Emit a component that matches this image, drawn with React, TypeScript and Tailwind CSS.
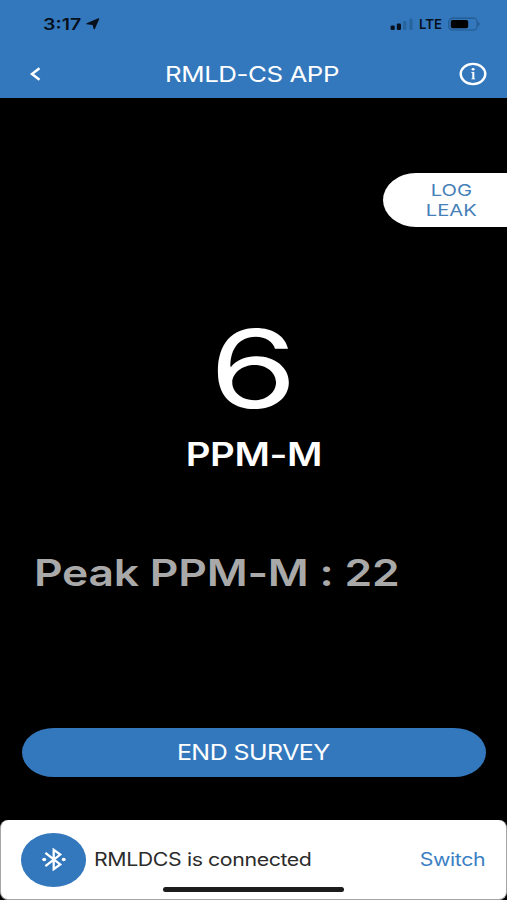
import type { ReactNode } from 'react';
import { clsx } from 'clsx';

type WideTextProps = {
  children: ReactNode;
  className?: string;
};

function WideText({ children, className }: WideTextProps) {
  return (
    <span className={clsx('inline-block whitespace-pre', className)}>
      {children}
    </span>
  );
}

function LocationArrow() {
  return (
    <svg viewBox="0 0 14 12" className="h-3 w-3.5" fill="#07101c" stroke="#07101c" strokeLinejoin="round">
      <path d="M12.6.9 8.3 10.8 7 6.4.9 5.7Z" strokeWidth="1.2" />
    </svg>
  );
}

function SignalBars() {
  return (
    <svg viewBox="0 0 24 12" className="h-3 w-6">
      <rect x="0.6" y="7.6" width="4.2" height="4.3" rx="1.2" fill="#07101c" />
      <rect x="6.8" y="5.6" width="4.2" height="6.3" rx="1.2" fill="#07101c" />
      <rect x="13" y="3" width="3.6" height="8.9" rx="1.2" fill="#28659f" />
      <rect x="19.2" y="0.8" width="3.4" height="11.1" rx="1.2" fill="#28659f" />
    </svg>
  );
}

function Battery() {
  return (
    <svg viewBox="0 0 34 14" className="h-3.5 w-[34px]">
      <rect x="0.8" y="1.2" width="28.4" height="11.8" rx="3.8" fill="none" stroke="#23588e" strokeWidth="1.2" />
      <rect x="2.8" y="3" width="17.4" height="8.2" rx="1.8" fill="#000" />
      <path d="M30.4 4.8c1.8.8 1.8 3.6 0 4.4Z" fill="#23588e" />
    </svg>
  );
}

function StatusBar() {
  return (
    <div className="flex h-12 items-center pr-[25px] pl-[43px]">
      <WideText className="w-[43px] origin-left scale-x-[1.22] text-[16px] leading-none font-semibold text-[#07101c]">
        3:17
      </WideText>
      <LocationArrow />
      <div className="ml-auto flex items-center">
        <SignalBars />
        <WideText className="ml-[5px] w-[29px] origin-left scale-x-[1.02] text-[13px] leading-none font-semibold text-[#07101c]">
          LTE
        </WideText>
        <Battery />
      </div>
    </div>
  );
}

function NavBar() {
  return (
    <div className="flex h-[50px] items-center justify-between pt-0.5 pr-5 pl-[29px]">
      <svg viewBox="0 0 14 14" className="h-3.5 w-3.5" fill="none" stroke="#fff" strokeWidth="2.5">
        <path d="M10.5 1.2 3 7l7.5 5.8" />
      </svg>
      <WideText className="ml-[3px] scale-x-[1.175] text-[22px] leading-none tracking-[-0.017em] text-white">
        RMLD-CS APP
      </WideText>
      <svg viewBox="0 0 28 24" className="h-6 w-7" fill="none" stroke="#fff">
        <ellipse cx="14" cy="12" rx="12.3" ry="10.1" strokeWidth="2.4" />
        <path d="M14.3 10v7" strokeWidth="2" />
        <path d="M12.2 10.4h2.6M12.4 16.9h3.8" strokeWidth="0.8" />
        <ellipse cx="14.1" cy="7.3" rx="1.5" ry="1.2" fill="#fff" stroke="none" />
      </svg>
    </div>
  );
}

function BluetoothBadge() {
  return (
    <div className="flex h-[53.5px] w-[65px] items-center justify-center rounded-[50%] bg-[#3378bd]">
      <svg viewBox="0 0 24 23" className="h-[23px] w-6" fill="none" stroke="#fff" strokeWidth="2.3">
        <path d="M3.4 4.8 18.2 16.4 11.7 21.2V1.8L18.2 6.6 3.4 18.2" />
        <ellipse cx="2.2" cy="11.5" rx="2" ry="1.7" fill="#fff" stroke="none" />
        <ellipse cx="21.7" cy="11.5" rx="2" ry="1.7" fill="#fff" stroke="none" />
      </svg>
    </div>
  );
}

function ConnectionPanel() {
  return (
    <footer className="flex h-[80px] flex-col rounded-lg border-x border-b border-[#a5a5a5] bg-white pr-[21px] pl-5">
      <div className="flex h-[66.5px] items-end">
        <BluetoothBadge />
        <div className="flex h-[53px] flex-1 items-center justify-between pl-[8px]">
          <WideText className="origin-left scale-x-[1.185] text-[18px] leading-none tracking-[-0.019em] text-[#2b2b2b]">
            RMLDCS is connected
          </WideText>
          <WideText className="origin-right scale-x-[1.185] text-[18px] leading-none tracking-[-0.02em] text-[#3b7fc4]">
            Switch
          </WideText>
        </div>
      </div>
      <div className="mx-auto mt-[0.5px] h-[5px] w-[181px] rounded-full bg-[#1c1c1c]" />
    </footer>
  );
}

export default function App() {
  return (
    <div className="flex h-[900px] w-[507px] flex-col overflow-hidden bg-black font-['Inter',sans-serif]">
      <header className="h-[98px] bg-[#3378bd]">
        <StatusBar />
        <NavBar />
      </header>

      <main className="flex flex-1 flex-col">
        <button className="mt-[75px] flex h-[54px] w-[124px] flex-col items-center justify-center self-end rounded-l-[33px_27px] bg-white pl-3 text-[16px] leading-5 text-[#4580b8]">
          <WideText className="scale-x-[1.26]">LOG</WideText>
          <WideText className="scale-x-[1.26]">LEAK</WideText>
        </button>

        <div className="mt-[87px] flex flex-col items-center text-white">
          <WideText className="h-[109px] scale-x-[1.31] text-[108px] leading-[109px]">6</WideText>
          <WideText className="mt-[12px] scale-x-[1.2] text-[32px] leading-10 font-semibold tracking-[-0.01em]">
            PPM-M
          </WideText>
        </div>

        <div className="mt-[74px] pl-[34px]">
          <WideText className="origin-left scale-x-[1.2] text-[37px] leading-[48px] font-semibold tracking-[-0.005em] text-[#a9a9a9]">
            Peak PPM-M : 22
          </WideText>
        </div>

        <button className="mt-auto mr-[21px] mb-[43.5px] ml-[22px] flex h-[48.5px] items-center justify-center rounded-[32px/24.25px] bg-[#3378bd] text-[22px] text-white">
          <WideText className="mr-px scale-x-[1.135] leading-none tracking-[-0.022em]">END SURVEY</WideText>
        </button>
      </main>

      <ConnectionPanel />
    </div>
  );
}
